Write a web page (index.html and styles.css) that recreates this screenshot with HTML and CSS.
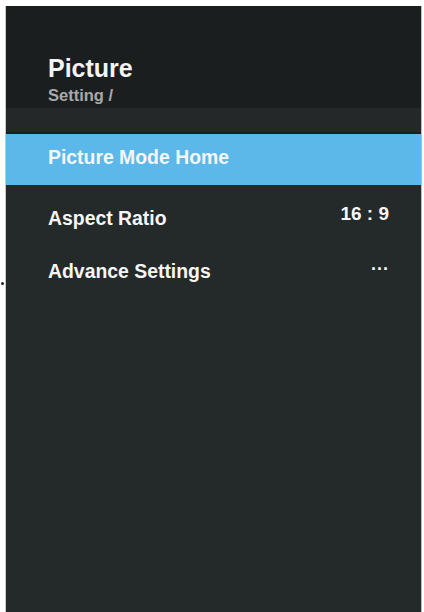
FILE: index.html
```html
<!DOCTYPE html>
<html lang="en">

<head>
  <meta charset="UTF-8" />
  <meta name="viewport" content="width=device-width, initial-scale=1.0" />
  <title>Picture</title>
  <link rel="stylesheet" href="styles.css">
</head>

<body>
  <span class="stray-dot"></span>
  <div class="panel">
    <div class="header">
      <h1 class="title">Picture</h1>
      <div class="crumb">Setting /</div>
    </div>
    <div class="band"></div>
    <ul class="menu">
      <li class="item active"><span>Picture Mode Home</span></li>
      <li class="item"><span>Aspect Ratio</span><span class="value ratio">16 : 9</span></li>
      <li class="item"><span>Advance Settings</span><span class="value dots">&middot;&middot;&middot;</span></li>
    </ul>
  </div>
</body>

</html>
```

FILE: styles.css
```css
*,
::before,
::after {
  box-sizing: border-box;
}

html {
  font-family: 'Liberation Sans', Arial, sans-serif;
}

body {
  margin: 0;
  background: #fff;
  width: 424px;
  height: 612px;
  padding: 6px 2px 0 5px;
  overflow: hidden;
}

.stray-dot {
  position: absolute;
  left: 1px;
  top: 282px;
  width: 3px;
  height: 3px;
  background: #222;
  border-radius: 50%;
}

.panel {
  height: 606px;
  background: #242929;
  border-left: 1px solid #c9c9c9;
  border-right: 1px solid #bdbdbd;
  color: #fff;
  display: flex;
  flex-direction: column;
}

/* header */
.header {
  background: #1b1e1e;
  padding: 48px 0 0 42px;
  height: 102px;
}

.title {
  margin: 0;
  font-size: 25px;
  line-height: 28px;
  font-weight: bold;
  color: #f4f4f4;
}

.crumb {
  margin-top: 3px;
  font-size: 16.5px;
  line-height: 20px;
  font-weight: bold;
  color: #a9a9a9;
}

.band {
  height: 26px;
  background: #252828;
  border-bottom: 2px solid #1c1f1f;
}

/* menu */
.menu {
  list-style: none;
  margin: 0;
  padding: 0;
}

.item {
  display: flex;
  justify-content: space-between;
  align-items: center;
  height: 56px;
  padding: 0 32px 0 42px;
  font-size: 19.4px;
  font-weight: bold;
  color: #f6f6f6;
}

.item.active {
  height: 51px;
  background: #5bb8e9;
  padding-bottom: 4px;
}

.item:nth-child(2) {
  padding-top: 10px;
}

.item:nth-child(3) {
  padding-top: 4px;
}

.value.ratio {
  font-size: 19px;
  margin-top: -8px;
}

.value.dots {
  font-size: 18px;
  margin-top: -4px;
}
```
